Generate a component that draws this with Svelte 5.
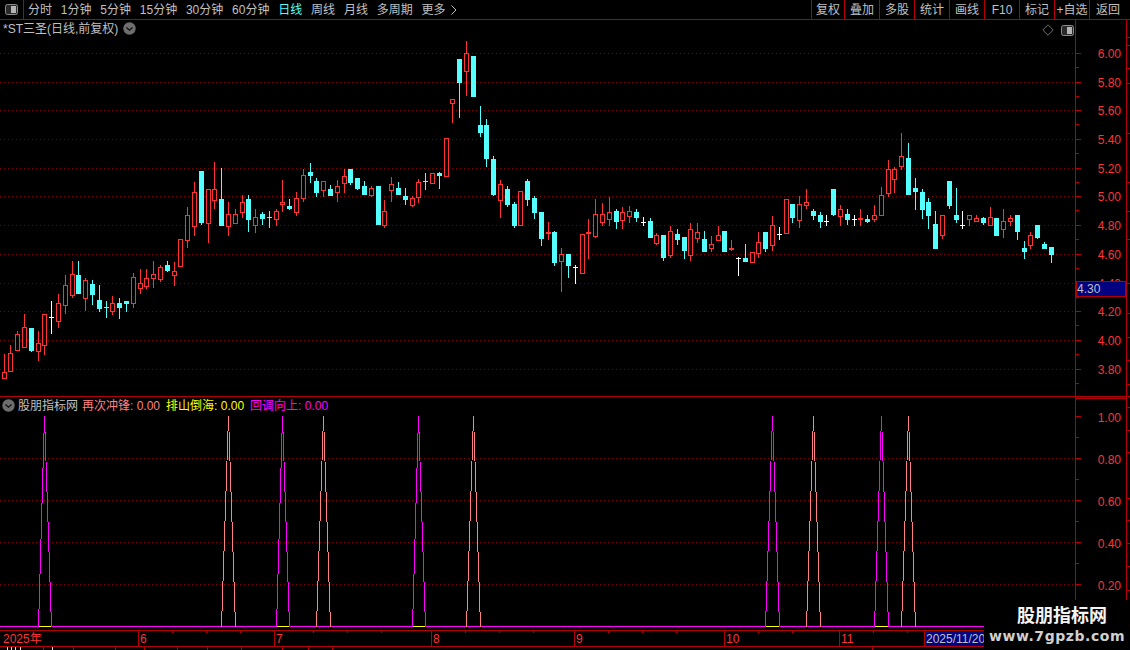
<script>
  const periods = ['分时','1分钟','5分钟','15分钟','30分钟','60分钟','日线','周线','月线','多周期'];
  const tools = ['复权','叠加','多股','统计','画线','F10','标记','+自选','返回'];
  const raw = `r 372 378 354 378;r 353 371 345 371;r 334 350 331 350;r 327 347 314 347;c 328 350 328 351;r 343 351 331 360;r 314 345 314 354;w 317 317 301 333;r 303 321 294 327;r 285 305 275 313;r 274 295 261 297;c 275 293 261 293;r 280 298 278 310;c 284 294 280 304;c 300 308 285 311;c 307 307 301 317;r 303 311 296 314;c 303 307 298 318;c 301 303 301 311;r 277 303 273 307;r 283 288 269 293;r 278 286 269 288;r 274 278 261 287;r 267 279 265 281;c 265 270 261 271;r 271 275 262 285;r 239 266 239 266;r 215 240 207 247;r 192 226 182 235;c 171 222 171 224;r 189 223 189 242;r 189 200 162 208;c 199 225 168 225;r 214 226 202 235;r 214 223 209 223;r 202 212 195 217;c 199 219 195 231;r 217 225 209 232;c 214 218 212 224;c 217 217 211 227;r 211 219 209 225;r 202 204 180 211;c 206 208 199 209;r 198 212 192 215;r 175 198 169 201;c 172 175 163 182;c 181 192 178 196;r 181 190 181 196;c 189 195 185 195;r 186 192 180 201;r 176 183 169 192;c 169 182 169 184;c 178 188 178 189;c 186 194 181 194;r 188 195 186 196;c 186 224 186 224;r 211 225 200 227;r 184 190 177 201;c 188 194 182 194;c 196 199 188 204;r 198 205 196 206;r 182 197 179 202;c 181 181 173 189;r 173 183 173 183;c 173 175 172 188;r 138 176 138 176;r 99 103 99 122;c 59 82 59 117;r 53 71 41 95;c 56 96 56 96;c 125 132 106 136;c 125 158 119 166;c 159 194 156 195;r 184 200 180 217;c 189 204 186 206;c 204 225 202 227;r 191 225 191 225;c 181 199 179 205;c 198 212 196 218;c 212 238 212 245;d 232 233 222 239;c 232 262 231 265;r 254 261 248 291;c 254 265 254 277;w 267 267 265 283;r 234 273 234 273;d 232 233 219 258;r 214 236 199 237;r 214 222 203 225;r 212 219 197 225;c 211 221 209 228;r 212 220 207 228;r 211 216 206 222;c 212 217 209 221;w 222 222 217 225;c 221 237 218 237;r 235 243 233 244;c 235 257 235 260;r 231 255 226 257;c 234 239 229 244;c 237 250 237 258;r 229 255 223 260;r 232 238 223 242;c 239 251 231 251;r 244 248 236 251;r 235 240 226 240;c 231 251 231 251;d 248 249 240 250;w 258 258 257 275;c 258 261 244 261;r 252 262 252 262;r 242 253 232 257;c 232 248 232 251;r 225 245 216 250;w 234 234 227 239;r 199 233 199 233;c 204 217 204 222;r 204 220 196 227;r 202 205 189 208;c 211 215 209 219;c 215 221 212 227;w 221 221 215 225;c 189 214 189 215;r 209 216 205 225;c 214 219 209 224;w 219 219 215 225;d 218 219 209 225;c 219 221 215 222;r 215 219 205 221;r 195 215 187 215;r 169 193 160 196;r 169 179 167 192;r 156 166 133 169;c 158 194 143 194;c 188 191 178 209;c 192 209 189 218;c 202 215 198 228;c 224 248 211 248;r 215 235 215 238;c 181 205 181 208;c 215 219 188 222;w 225 225 211 228;r 215 219 215 225;r 218 221 215 221;c 218 222 217 224;r 217 225 207 225;c 218 235 218 235;r 221 229 209 237;r 218 221 215 225;c 215 231 215 239;c 248 251 241 258;r 235 245 232 248;c 225 237 225 238;c 244 248 242 248;c 247 254 247 262`;
  const xOf = (i) => Math.round(3.5 + i * 6.8);
  const COLORS = { r: '#ff3232', d: '#ff3232', c: '#54ffff', w: '#ffffff' };
  const candles = raw.split(';').map((s, i) => {
    const [t, bt, bb, wt, wb] = s.split(' ');
    return { t, x: xOf(i), bt: +bt, bb: +bb, wt: +wt, wb: +wb, color: COLORS[t] };
  });

  const priceLabels = ['6.00','5.80','5.60','5.40','5.20','5.00','4.80','4.60','4.40','4.20','4.00','3.80'];
  const priceY = [53,82,110,139,168,196,225,254,283,311,340,369];
  const priceMinor = priceY.map((y) => y + 14);
  const subLabels = ['1.00','0.80','0.60','0.40','0.20'];
  const subY = [417,459,501,543,585];
  const subMinor = [438,480,522,564];

  const railTicksA = [37,45,68,83,133,182,211,239,283,313,337,360,384];
  const railTicksB = [407,430,452,498,520,543,566,590];

  const spikes = [
    { i: 6, kind: 'm' },{ i: 33, kind: 's' },{ i: 41, kind: 'm' },{ i: 47, kind: 's' },{ i: 61, kind: 'm' },
    { i: 69, kind: 's' },{ i: 113, kind: 'm' },{ i: 119, kind: 's' },{ i: 129, kind: 'm' },{ i: 133, kind: 's' }
  ].map((s) => ({ ...s, x: xOf(s.i), l: xOf(s.i - 1), r: xOf(s.i + 1), color: s.kind === 'm' ? '#ff00ff' : '#ff8080' }));

  const months = [{ x: 3, t: '2025年' },{ x: 140, t: '6' },{ x: 276, t: '7' },{ x: 433, t: '8' },{ x: 576, t: '9' },{ x: 726, t: '10' },{ x: 841, t: '11' }];
  const monthSeps = [138,274,431,574,724,839];
  const xTicks = [172,206,240,313,347,381,465,499,533,608,642,676,758,792,873,907];
  const stripSeps = [43,73,115,144,177,207,241,282,308,332,872];
</script>

<div class="app">
  <header class="toolbar">
    <div class="cell-icon">
      <svg width="13" height="11" viewBox="0 0 13 11"><rect x="0.5" y="0.5" width="12" height="10" rx="2" fill="#2a2a2a" stroke="#8c8c8c"/><rect x="6" y="2" width="5" height="7" fill="#b4b4b4"/></svg>
    </div>
    <nav class="periods">
      {#each periods as p}
        <span class:active={p === '日线'}>{p}</span>
      {/each}
      <span class="more">更多
        <svg width="6" height="10" viewBox="0 0 6 10"><path d="M.5.5 5 5 .5 9.5" fill="none" stroke="#c0c0c0"/></svg>
      </span>
    </nav>
    <nav class="tools">
      {#each tools as t}
        <span>{t}</span>
      {/each}
    </nav>
  </header>

  <section class="pane pane-main">
    <svg class="plot" width="1075" height="376" viewBox="0 20 1075 376" shape-rendering="crispEdges">
      {#each priceY as y}
        <line x1="0" x2="1075" y1={y + 0.5} y2={y + 0.5} class="grid"/>
      {/each}
      {#each candles as c}
        <line x1={c.x + 0.5} x2={c.x + 0.5} y1={c.wt} y2={c.wb + 1} stroke={c.color}/>
        {#if c.t === 'r'}
          <rect x={c.x - 1.5} y={c.bt + 0.5} width="4" height={c.bb - c.bt} fill="#000" stroke={c.color}/>
        {:else}
          <rect x={c.x - 2} y={c.bt} width="5" height={c.bb - c.bt + 1} fill={c.color}/>
        {/if}
      {/each}
    </svg>
    <div class="title-row">
      <span class="title">*ST三圣(日线,前复权)</span>
      <svg width="13" height="13" viewBox="0 0 13 13"><circle cx="6.5" cy="6.5" r="6.2" fill="#6e6e6e"/><path d="M3.5 5.5 6.5 8.2 9.5 5.5" fill="none" stroke="#111" stroke-width="1.3"/></svg>
    </div>
    <div class="corner-icons">
      <svg width="12" height="12" viewBox="0 0 12 12"><path d="M6 .8 11.2 6 6 11.2 .8 6Z" fill="none" stroke="#6e6e6e"/></svg>
      <svg width="13" height="11" viewBox="0 0 13 11"><rect x="0.5" y="0.5" width="12" height="10" rx="2" fill="#2a2a2a" stroke="#8c8c8c"/><rect x="6" y="2" width="5" height="7" fill="#b4b4b4"/></svg>
    </div>
    <svg class="axis" width="55" height="376" viewBox="1075 20 55 376">
      <g shape-rendering="crispEdges">
        <line x1="1075.5" x2="1075.5" y1="20" y2="396" class="rule"/>
        <line x1="1126.5" x2="1126.5" y1="20" y2="396" class="rule"/>
        {#each priceY as y}<line x1="1076" x2="1081" y1={y + 0.5} y2={y + 0.5} class="rule"/>{/each}
        {#each priceMinor as y}<line x1="1076" x2="1079" y1={y + 0.5} y2={y + 0.5} class="rule"/>{/each}
        {#each railTicksA as y}<line x1="1127" x2="1130" y1={y + 0.5} y2={y + 0.5} class="rule"/>{/each}
      </g>
      {#each priceLabels as l, i}
        <text x="1121" y={priceY[i] + 5} text-anchor="end" class="axis-text">{l}</text>
      {/each}
      <rect x="1076.5" y="281.5" width="49" height="15" fill="#000080" stroke="#b40000" shape-rendering="crispEdges"/>
      <text x="1077" y="293" class="axis-text price-tag">4.30</text>
    </svg>
  </section>

  <section class="pane pane-sub">
    <svg class="plot" width="1075" height="233" viewBox="0 397 1075 233" shape-rendering="crispEdges">
      {#each subY.slice(1) as y}
        <line x1="0" x2="1075" y1={y - 0.5} y2={y - 0.5} class="grid"/>
      {/each}
      <line x1="0" x2="1075" y1="626.5" y2="626.5" stroke="#ff00ff"/>
      {#each spikes as s}
        {#if s.kind === 'm'}
          <line x1={s.l} x2={s.r} y1="626.5" y2="626.5" stroke="#ffff00"/>
        {/if}
        <polyline points="{s.l + 0.5},627 {s.x + 0.5},416 {s.r + 0.5},627" fill="none" stroke={s.color}/>
      {/each}
    </svg>
    <div class="legend">
      <svg width="13" height="13" viewBox="0 0 13 13"><circle cx="6.5" cy="6.5" r="6.2" fill="#6e6e6e"/><path d="M3.5 5.5 6.5 8.2 9.5 5.5" fill="none" stroke="#111" stroke-width="1.3"/></svg>
      <span class="legend-name">股朋指标网</span>
      <span class="salmon">再次冲锋: 0.00</span>
      <span class="yellow">排山倒海: 0.00</span>
      <span class="magenta">回调向上: 0.00</span>
    </div>
    <svg class="axis" width="55" height="233" viewBox="1075 397 55 233">
      <g shape-rendering="crispEdges">
        <line x1="1075.5" x2="1075.5" y1="397" y2="630" class="rule"/>
        <line x1="1126.5" x2="1126.5" y1="397" y2="630" class="rule"/>
        <line x1="1076" x2="1126" y1="398.5" y2="398.5" class="rule"/>
        {#each subY as y}<line x1="1076" x2="1081" y1={y - 0.5} y2={y - 0.5} class="rule"/>{/each}
        {#each subMinor as y}<line x1="1076" x2="1079" y1={y - 0.5} y2={y - 0.5} class="rule"/>{/each}
        {#each railTicksB as y}<line x1="1127" x2="1130" y1={y + 0.5} y2={y + 0.5} class="rule"/>{/each}
      </g>
      {#each subLabels as l, i}
        <text x="1121" y={subY[i] + 5} text-anchor="end" class="axis-text">{l}</text>
      {/each}
    </svg>
  </section>

  <svg class="timeline" width="1130" height="20" viewBox="0 630 1130 20">
    <g shape-rendering="crispEdges">
      <line x1="0" x2="1130" y1="630.5" y2="630.5" class="rule"/>
      <line x1="0" x2="1130" y1="646.5" y2="646.5" class="rule"/>
      {#each monthSeps as x}<line x1={x + 0.5} x2={x + 0.5} y1="631" y2="646" class="rule"/>{/each}
      {#each xTicks as x}<line x1={x + 0.5} x2={x + 0.5} y1="631" y2="633" class="rule"/>{/each}
      {#each stripSeps as x}<line x1={x + 0.5} x2={x + 0.5} y1="647" y2="650" class="rule"/>{/each}
      <rect x="924.5" y="631" width="60" height="15" fill="#000080"/>
      <line x1="924.5" x2="924.5" y1="631" y2="646" class="rule"/>
      <rect x="7" y="647" width="1" height="3" fill="#ddd"/><rect x="11" y="647" width="1" height="3" fill="#ddd"/>
      <rect x="15" y="647" width="1" height="3" fill="#ddd"/><rect x="20" y="647" width="1" height="3" fill="#ddd"/>
      <rect x="52" y="647" width="1" height="3" fill="#ddd"/>
    </g>
    {#each months as m}
      <text x={m.x} y="643" class="axis-text">{m.t}</text>
    {/each}
    <text x="926" y="643" class="axis-text date-tag">2025/11/20</text>
  </svg>

  <aside class="watermark">
    <strong>股朋指标网</strong>
    <span>www.7gpzb.com</span>
  </aside>
</div>

<style>
  :global(body) { margin: 0; background: #000; }
  .app {
    position: relative;
    width: 1130px;
    height: 650px;
    overflow: hidden;
    background: #000;
    color: #c0c0c0;
    font: 12px/1 "Liberation Sans", "Noto Sans CJK SC", sans-serif;
    display: flex;
    flex-direction: column;
  }
  svg { display: block; flex: none; }

  .toolbar {
    height: 19px;
    flex: none;
    display: flex;
    align-items: stretch;
    border-bottom: 1px solid #b40000;
  }
  .cell-icon {
    width: 23px;
    flex: none;
    display: flex;
    align-items: center;
    justify-content: center;
    border-right: 1px solid #b40000;
    margin-right: 4px;
  }
  .periods {
    display: flex;
    align-items: center;
    gap: 8.8px;
    white-space: nowrap;
  }
  .more { display: flex; align-items: center; gap: 5px; }
  .active { color: #54ffff; }
  .tools {
    margin-left: auto;
    display: flex;
    align-items: stretch;
    width: 319px;
    flex: none;
  }
  .tools span {
    flex: 0 0 35px;
    box-sizing: border-box;
    display: flex;
    align-items: center;
    justify-content: center;
    border-left: 1px solid #b40000;
    white-space: nowrap;
  }
  .tools span:first-child { flex-basis: 33px; }
  .tools span:last-child { flex-basis: 41px; justify-content: flex-start; padding-left: 6px; }

  .pane { position: relative; display: flex; flex: none; }
  .pane-main { height: 376px; border-bottom: 1px solid #b40000; }
  .pane-sub { height: 233px; }

  .grid { stroke: #800000; stroke-dasharray: 1 3; }
  .rule { stroke: #b40000; }
  .axis-text { font: 12px "Liberation Sans", "Noto Sans CJK SC", sans-serif; fill: #ff3232; }
  .price-tag, .date-tag { fill: #c0c0c0; }

  .title-row {
    position: absolute;
    left: 3px;
    top: 2px;
    display: flex;
    align-items: center;
    gap: 5px;
  }
  .corner-icons {
    position: absolute;
    left: 1042px;
    top: 4px;
    display: flex;
    align-items: center;
    gap: 7px;
  }
  .legend {
    position: absolute;
    left: 2px;
    top: 2px;
    display: flex;
    align-items: center;
    gap: 6px;
    white-space: nowrap;
  }
  .legend svg { margin-right: -3px; }
  .legend-name { margin-right: -2px; }
  .salmon { color: #ff8080; }
  .yellow { color: #ffff00; }
  .magenta { color: #ff00ff; }

  .watermark {
    position: absolute;
    left: 984px;
    top: 600px;
    width: 146px;
    height: 50px;
    background: #000;
    display: flex;
    flex-direction: column;
    align-items: center;
    gap: 4px;
    padding-top: 4px;
    box-sizing: border-box;
  }
  .watermark strong { font: bold 18px/20px "Noto Sans CJK SC", sans-serif; color: #f4f4f4; margin-left: 10px; }
  .watermark span { font: bold 14px/16px "DejaVu Sans", sans-serif; color: #d0d0d0; letter-spacing: 0.55px; white-space: nowrap; }
</style>
